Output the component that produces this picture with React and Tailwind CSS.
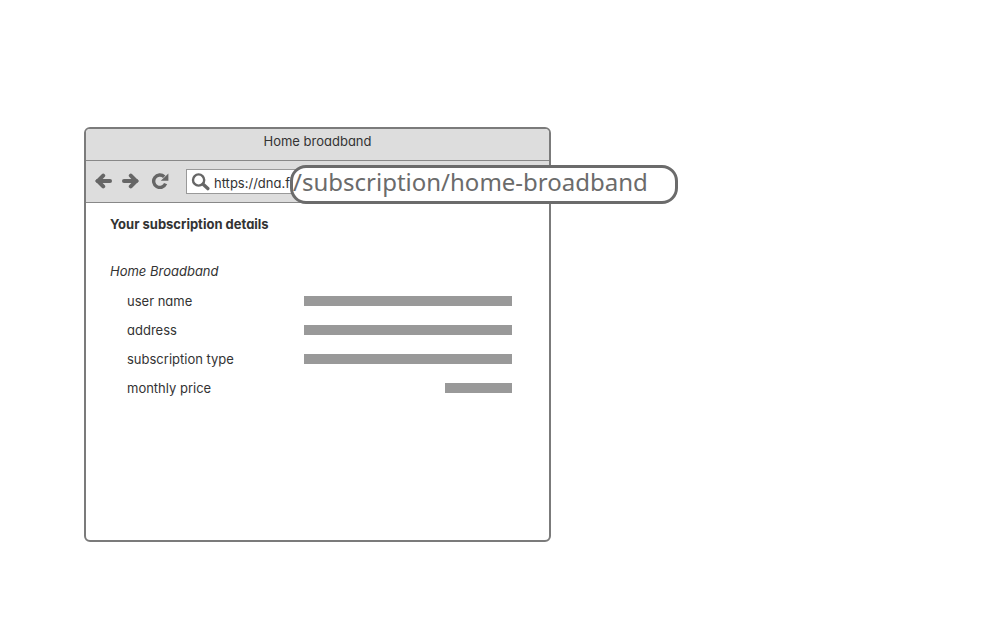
const details = [
  { label: "user name", bar: "w-full" },
  { label: "address", bar: "w-full" },
  { label: "subscription type", bar: "w-full" },
  { label: "monthly price", bar: "w-[67px]" },
];

function ArrowIcon({ flipped }) {
  return (
    <svg width="18" height="16" viewBox="0 0 18 16" fill="none" stroke="#666" className={flipped ? "-scale-x-100" : ""}>
      <path d="M2.6 8H15" strokeWidth="4" strokeLinecap="round" />
      <path d="M8.2 2.6L2.8 8L8.2 13.4" strokeWidth="4" strokeLinecap="round" strokeLinejoin="miter" />
    </svg>
  );
}

function ReloadIcon() {
  return (
    <svg width="18" height="16" viewBox="0 0 18 16" fill="none">
      <path d="M14.6 10.6A6.2 6.2 0 1 1 13.2 3.8" stroke="#666" strokeWidth="3.4" />
      <path d="M17.4 0.6V7.8H9.8Z" fill="#666" />
    </svg>
  );
}

function SearchIcon() {
  return (
    <svg width="20" height="18" viewBox="0 0 20 18" fill="none" stroke="#666" className="shrink-0">
      <circle cx="7.6" cy="7" r="5.6" strokeWidth="2.4" />
      <path d="M12.4 11.6L16.8 15.6" strokeWidth="3.4" strokeLinecap="round" />
    </svg>
  );
}

export default function App() {
  return (
    <main className="min-h-screen bg-white pt-[127px] pr-4 pb-20 pl-[84px] font-['Inter',sans-serif] text-[13px] leading-4 text-[#333] [font-feature-settings:'cv11']">
      <section className="w-full max-w-[467px] rounded-md border-2 border-[#7b7b7b]">
        <header className="rounded-t bg-[#ddd]">
          <h1 className="border-b border-[#888] pt-1 pb-[11px] text-center">
            Home broadband
          </h1>
          <nav className="relative flex h-[42px] items-center border-b border-[#888] px-[9px]">
            <div className="flex items-center pb-0.5">
              <button type="button" aria-label="Back">
                <ArrowIcon />
              </button>
              <button type="button" aria-label="Forward" className="ml-2">
                <ArrowIcon flipped />
              </button>
              <button type="button" aria-label="Reload" className="ml-3">
                <ReloadIcon />
              </button>
            </div>
            <label className="ml-[17px] flex h-[25px] flex-1 items-center border border-[#999] bg-white pl-1">
              <SearchIcon />
              <input
                type="text"
                aria-label="Address"
                defaultValue="https://dna.fi"
                className="w-full min-w-0 pt-0.5 pl-[3px] outline-none"
              />
            </label>
            <p className="absolute top-1 left-[204px] flex h-[39px] w-[388px] items-center rounded-2xl border-3 border-[#6b6b6b] bg-white pb-1.5 font-['Noto_Sans',sans-serif] text-2xl whitespace-nowrap text-[#6b6b6b]">
              /subscription/home-broadband
            </p>
          </nav>
        </header>
        <div className="min-h-[337px] pt-[13px] pr-[37px] pl-6">
          <h2 className="font-bold">Your subscription details</h2>
          <h3 className="mt-[31px] italic">Home Broadband</h3>
          <dl className="mt-[14px] flex flex-col gap-[13px] pl-[17px]">
            {details.map(({ label, bar }) => (
              <div key={label} className="flex items-center">
                <dt className="flex-1">{label}</dt>
                <dd className="flex w-[208px] justify-end">
                  <span className={`h-[10px] bg-[#999] ${bar}`} />
                </dd>
              </div>
            ))}
          </dl>
        </div>
      </section>
    </main>
  );
}
